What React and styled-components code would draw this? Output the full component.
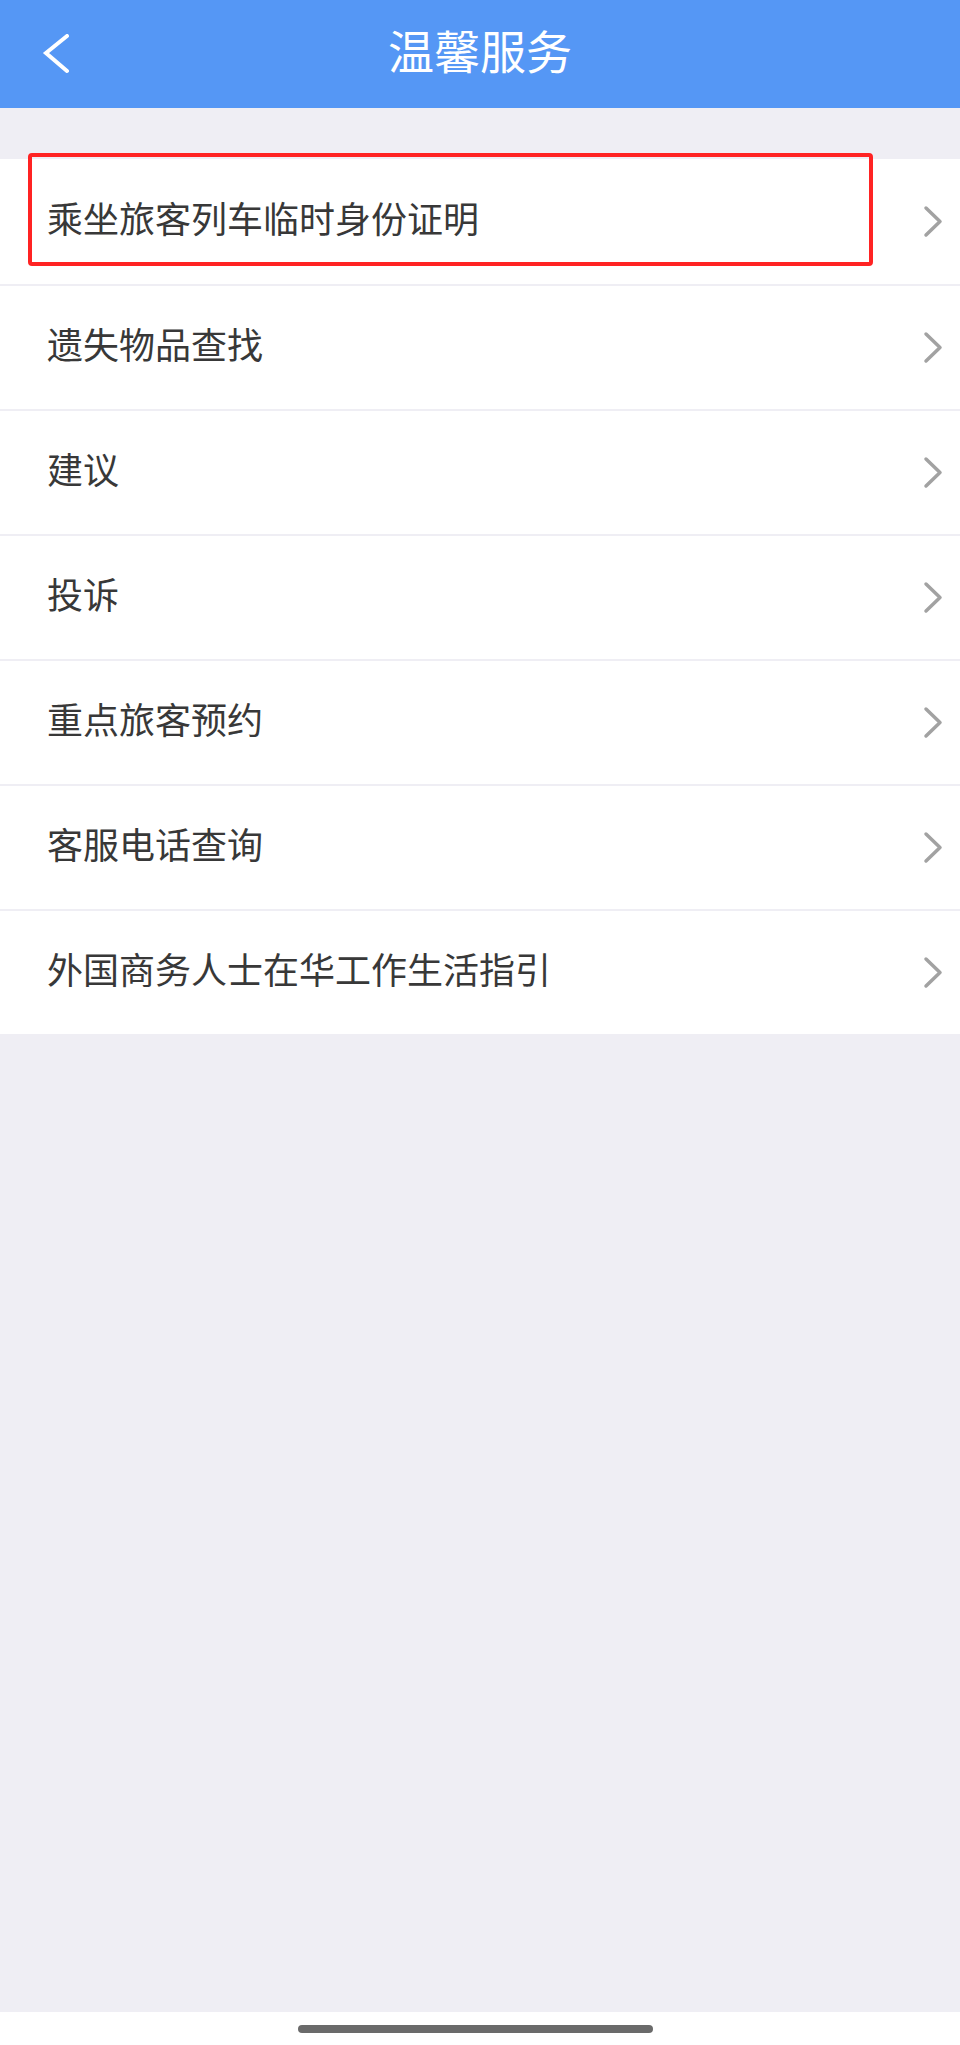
import React from "react";
import styled, { createGlobalStyle } from "styled-components";

const GlobalStyle = createGlobalStyle`
  html, body {
    margin: 0;
    padding: 0;
    background: #efeef4;
    font-family: "Noto Sans CJK SC", "Noto Sans", sans-serif;
  }
`;

const Page = styled.div`
  display: flex;
  flex-direction: column;
  height: 2045px;
`;

const Header = styled.header`
  display: grid;
  grid-template-columns: 120px 1fr 120px;
  align-items: center;
  height: 108px;
  background: #5597f5;
  color: #fff;
`;

const BackButton = styled.button`
  display: flex;
  align-items: center;
  justify-self: start;
  margin-left: 42px;
  padding: 0;
  border: 0;
  background: none;
  cursor: pointer;
`;

const Title = styled.h1`
  margin: 0 0 8px;
  text-align: center;
  font-size: 46px;
  line-height: 1.2;
  font-weight: 400;
`;

const Body = styled.main`
  flex: 1;
  padding-top: 51px;
`;

const MenuList = styled.ul`
  position: relative;
  list-style: none;
  margin: 0;
  padding: 0;
  background: #fff;
`;

const MenuItem = styled.li`
  display: flex;
  align-items: center;
  justify-content: space-between;
  height: 125px;
  box-sizing: border-box;
  padding: 0 17px 0 47px;

  &:not(:first-child) {
    border-top: 2px solid #efeef4;
  }
`;

const Label = styled.span`
  margin-bottom: 8px;
  font-size: 36px;
  line-height: 1.2;
  color: #383838;
`;

const Highlight = styled.div`
  position: absolute;
  top: -6px;
  left: 28px;
  width: 845px;
  height: 113px;
  box-sizing: border-box;
  border: 4px solid #ff2323;
  border-radius: 4px;
  pointer-events: none;
`;

const HomeArea = styled.div`
  display: flex;
  justify-content: center;
  align-items: center;
  height: 33px;
  background: #fff;
`;

const HomeBar = styled.div`
  width: 355px;
  height: 8px;
  margin-right: 9px;
  border-radius: 4px;
  background: #6a6a6a;
`;

const items = [
  "乘坐旅客列车临时身份证明",
  "遗失物品查找",
  "建议",
  "投诉",
  "重点旅客预约",
  "客服电话查询",
  "外国商务人士在华工作生活指引",
];

function BackIcon() {
  return (
    <svg width="28" height="40" viewBox="0 0 28 40">
      <polyline
        points="25,2 4,19 25,37"
        fill="none"
        stroke="#fff"
        strokeWidth="4"
        strokeLinecap="round"
      />
    </svg>
  );
}

function Chevron() {
  return (
    <svg width="20" height="33" viewBox="0 0 20 33">
      <polyline
        points="3,3 17,16.5 3,30"
        fill="none"
        stroke="#a2a2a2"
        strokeWidth="3.5"
        strokeLinecap="round"
        strokeLinejoin="round"
      />
    </svg>
  );
}

export default function App() {
  return (
    <>
      <GlobalStyle />
      <Page>
        <Header>
          <BackButton aria-label="返回">
            <BackIcon />
          </BackButton>
          <Title>温馨服务</Title>
          <div />
        </Header>

        <Body>
          <MenuList>
            {items.map((item) => (
              <MenuItem key={item}>
                <Label>{item}</Label>
                <Chevron />
              </MenuItem>
            ))}
            <Highlight />
          </MenuList>
        </Body>

        <HomeArea>
          <HomeBar />
        </HomeArea>
      </Page>
    </>
  );
}
